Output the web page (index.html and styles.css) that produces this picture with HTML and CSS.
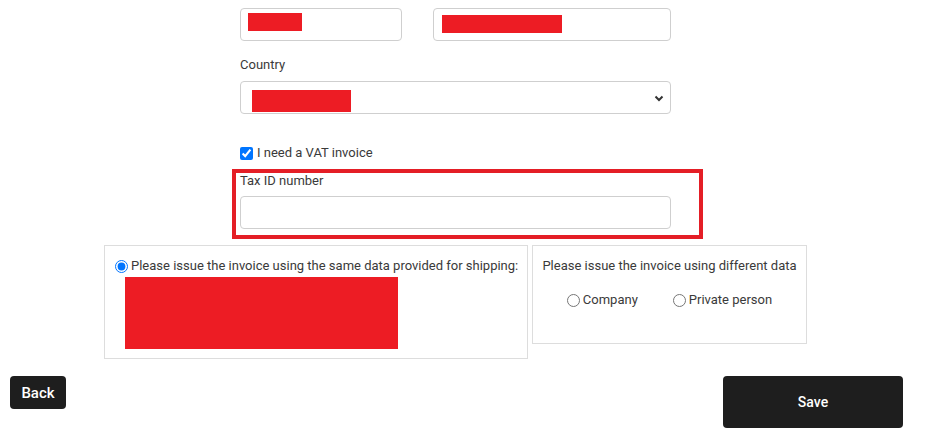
FILE: index.html
```html
<!DOCTYPE html>
<html lang="en">
<head>
    <meta charset="UTF-8">
    <meta name="viewport" content="width=device-width, initial-scale=1.0">
    <title>Billing details</title>
    <link rel="stylesheet" href="styles.css">
</head>
<body>
    <div class="page">
        <div class="form">
            <div class="row">
                <div class="field field-zip"><span class="redact redact-zip"></span></div>
                <div class="field field-city"><span class="redact redact-city"></span></div>
            </div>

            <label class="lbl lbl-country">Country</label>
            <div class="select">
                <span class="redact redact-country"></span>
                <svg class="chevron" width="10" height="7" viewBox="0 0 10 7">
                    <path d="M1.5 1.5 L5 5 L8.5 1.5" fill="none" stroke="#333" stroke-width="2"/>
                </svg>
            </div>

            <label class="check">
                <input type="checkbox" checked> I need a VAT invoice
            </label>

            <div class="vat-box">
                <label class="lbl" for="tax_id">Tax ID number</label>
                <input type="text" id="tax_id" class="input">
            </div>
        </div>

        <div class="invoice">
            <div class="box box-same">
                <label class="radio">
                    <input type="radio" name="invoice" checked> Please issue the invoice using the same data provided for shipping:
                </label>
                <div class="redact redact-address"></div>
            </div>
            <div class="box box-other">
                <div class="box-title">Please issue the invoice using different data</div>
                <div class="choices">
                    <label class="radio"><input type="radio" name="invoice"> Company</label>
                    <label class="radio"><input type="radio" name="invoice"> Private person</label>
                </div>
            </div>
        </div>

        <div class="actions">
            <button class="btn btn-back">Back</button>
            <button class="btn btn-save">Save</button>
        </div>
    </div>
</body>
</html>
```

FILE: styles.css
```css
body {
    margin: 0;
    font-family: Roboto, 'Liberation Sans', Arial, sans-serif;
    font-size: 13px;
    color: #3a3a3a;
    background-color: #ffffff;
}
.page {
    padding-top: 8px;
}
.form {
    width: 431px;
    margin-left: 240px;
}
.row {
    display: flex;
    gap: 31px;
}
.lbl {
    display: block;
    line-height: 16px;
    margin-bottom: 8px;
}
.field, .select, .input {
    box-sizing: border-box;
    height: 33px;
    border: 1px solid #cfcfcf;
    border-radius: 4px;
    background-color: #fff;
}
.field {
    padding-top: 4px;
    padding-left: 7px;
}
.field-zip {
    width: 162px;
}
.field-city {
    width: 238px;
    padding-top: 6px;
    padding-left: 8px;
}
.redact {
    display: block;
    background-color: #ed1c24;
}
.redact-zip {
    width: 54px;
    height: 18px;
}
.redact-city {
    width: 120px;
    height: 18px;
}
.lbl-country {
    margin-top: 16px;
}
.select {
    position: relative;
    padding-top: 8px;
    padding-left: 11px;
}
.redact-country {
    width: 99px;
    height: 22px;
}
.chevron {
    position: absolute;
    right: 6px;
    top: 13px;
}
.check {
    display: flex;
    align-items: center;
    margin-top: 31px;
    line-height: 16px;
}
.check input {
    margin: 0 4px 0 0;
    width: 13px;
    height: 13px;
}
.vat-box {
    box-sizing: border-box;
    width: 471px;
    margin-left: -8px;
    margin-top: 8px;
    border: 4px solid #e41e26;
    padding: 0 4px 6px 4px;
}
.vat-box .lbl {
    margin-bottom: 7px;
}
.input {
    display: block;
    width: 431px;
    font: inherit;
    outline: none;
}
.invoice {
    display: flex;
    align-items: flex-start;
    gap: 4px;
    margin-left: 104px;
    margin-top: 6px;
}
.box {
    box-sizing: border-box;
    border: 1px solid #dddddd;
}
.box-same {
    width: 424px;
    height: 114px;
    padding: 12px 8px 0 10px;
}
.box-other {
    width: 275px;
    height: 99px;
    padding-top: 12px;
    text-align: center;
}
.radio {
    display: inline-flex;
    align-items: center;
    line-height: 16px;
    white-space: nowrap;
}
.radio input {
    margin: 0 3px 0 0;
    width: 13px;
    height: 13px;
}
.redact-address {
    width: 273px;
    height: 72px;
    margin-left: 10px;
    margin-top: 1px;
}
.box-title {
    line-height: 16px;
}
.choices {
    display: flex;
    justify-content: center;
    gap: 35px;
    margin-top: 18px;
}
.actions {
    display: flex;
    justify-content: space-between;
    align-items: flex-start;
    padding: 0 25px 0 10px;
    margin-top: 17px;
}
.btn {
    background-color: #1e1e1e;
    color: #fff;
    border: none;
    border-radius: 4px;
    font-family: Roboto, 'Liberation Sans', Arial, sans-serif;
    font-weight: 500;
    cursor: pointer;
}
.btn-back {
    width: 56px;
    height: 33px;
    font-size: 15px;
}
.btn-save {
    width: 180px;
    height: 52px;
    font-size: 14px;
}
```
